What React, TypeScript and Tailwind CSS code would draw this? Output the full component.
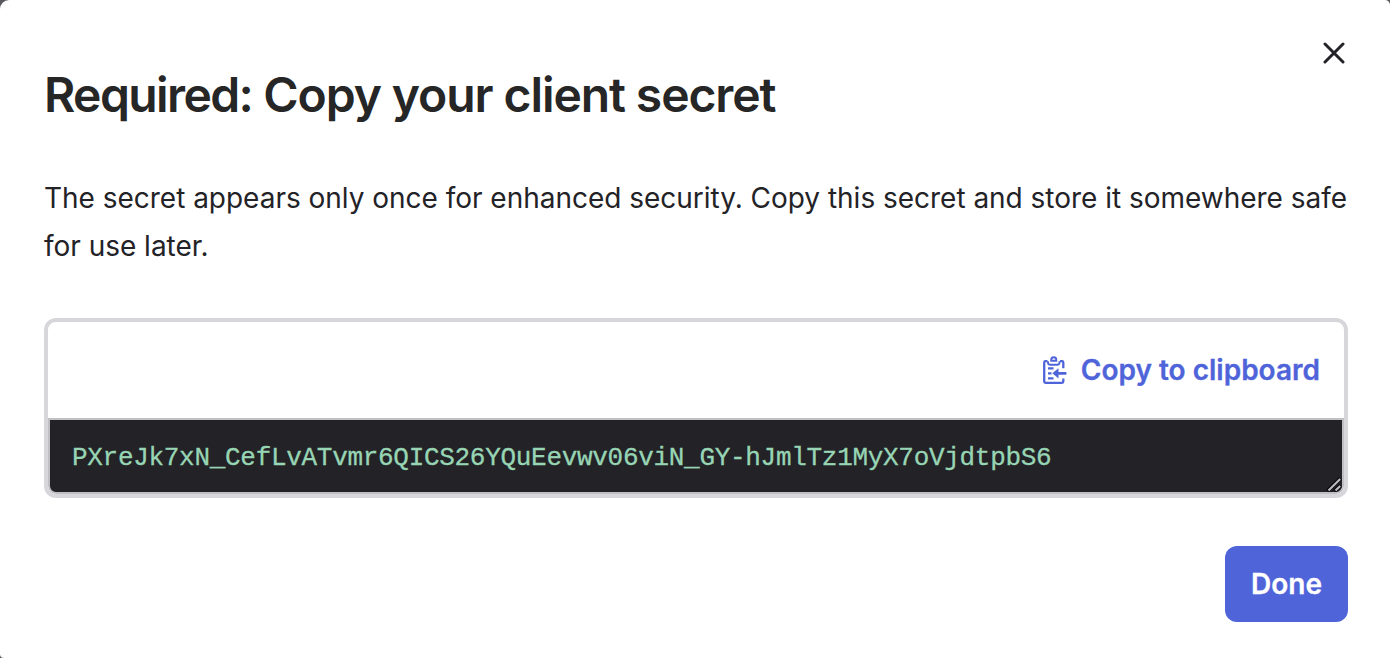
import React from "react";

function CloseIcon() {
  return (
    <svg width="22" height="22" viewBox="0 0 22 22" fill="none" stroke="#232227" strokeWidth="3" strokeLinecap="round">
      <path d="M2 2L20 20M20 2L2 20" />
    </svg>
  );
}

function ClipboardIcon() {
  return (
    <svg width="24" height="29" viewBox="0 0 24 29" fill="none" stroke="#5064da" strokeWidth="2.3">
      <path d="M4.500 5.200H2.500Q1.200 5.200 1.200 6.500V25.600Q1.200 26.900 2.500 26.900H19Q20.300 26.900 20.300 25.600V22.500M17 5.200H19Q20.300 5.200 20.300 6.500V12.300" />
      <path d="M8.200 4.800V3.800A2.500 2.500 0 0 1 13.300 3.800V4.800Z" strokeWidth="1.900" />
      <path d="M5 5.200V6.500Q5 8.700 7.200 8.700H14.300Q16.500 8.700 16.500 6.500V5.200" strokeWidth="1.900" />
      <path d="M5 12.300H10.500M5 17.300H8.500M5 22.300H10.500" />
      <path d="M14 17.300H23.400" strokeWidth="2.800" />
      <path d="M9.300 17.300L15.500 12.200V22.400Z" fill="#5064da" stroke="none" />
    </svg>
  );
}

export default function App() {
  return (
    <div className="h-[658px] w-[1390px] overflow-hidden bg-[#58575b]">
      <main className="flex h-full flex-col rounded-tl-[9px] rounded-tr-[5px] rounded-bl-[4px] bg-white pt-[42px] pr-[42px] pl-11 font-['Inter',sans-serif] text-[#262626]">
        <header className="flex h-[86px] items-start justify-between">
          <h1 className="pt-[24px] text-[48px] leading-[58px] font-semibold tracking-[-1.08px] whitespace-nowrap">
            <span className="tracking-[-1.6px]">Required:</span> Copy your client secret
          </h1>
          <button aria-label="Close" className="mr-[3px]">
            <CloseIcon />
          </button>
        </header>
        <p className="mt-[46px] h-24 text-[28px] leading-[48px] tracking-[-0.02px] whitespace-nowrap text-[#232227]">
          The secret appears only once for enhanced security. Copy this secret and store it somewhere safe
          <br />
          for use later.
        </p>
        <section className="mt-12 flex h-[180px] shrink-0 flex-col overflow-hidden rounded-[12px] border-4 border-[#d7d6db]">
          <div className="flex h-24 shrink-0 items-center justify-end pr-[24px]">
            <button className="flex items-center gap-[14px] text-[28px] leading-[34px] font-semibold whitespace-nowrap text-[#5064da] [-webkit-text-stroke:0.3px_#5064da]">
              <ClipboardIcon />
              <span>Copy to clipboard</span>
            </button>
          </div>
          <div className="relative flex flex-1 items-center rounded-b-[8px] border-2 border-[#c0c0c4] bg-[#232227] pt-[3px] pl-[22px]">
            <code className="font-['Liberation_Mono',monospace] text-[26px] leading-[32px] tracking-[-0.3px] whitespace-nowrap text-[#97d5b4] [-webkit-text-stroke:0.3px_#97d5b4]">
              PXreJk7xN_CefLvATvmr6QICS26YQuEevwv06viN_GY-hJmlTz1MyX7oVjdtpbS6
            </code>
            <svg className="absolute right-0 bottom-0" width="16" height="16" viewBox="0 0 16 16" fill="none">
              <path d="M1.500 15L14.500 2.500M8.500 15L14.500 9.500" stroke="#0c0c0e" strokeWidth="4" />
              <path d="M2.500 14.500L14.200 3M9.500 14.500L14.200 10" stroke="#bdbdbf" strokeWidth="2" />
            </svg>
          </div>
        </section>
        <button className="mt-12 h-[76px] w-[123px] shrink-0 self-end rounded-[12px] bg-[#5064da] text-[28px] leading-[34px] font-semibold text-white [-webkit-text-stroke:0.3px_#fff]">
          Done
        </button>
      </main>
    </div>
  );
}
